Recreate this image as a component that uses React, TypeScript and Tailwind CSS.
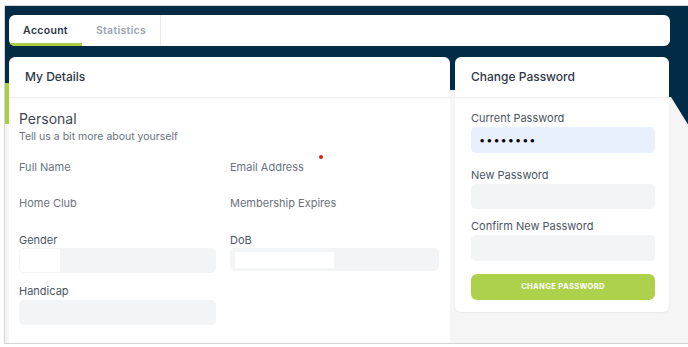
import React from "react";

const head = "font-['Inter','Noto_Sans',sans-serif]";

const Label = ({ children, dark = false }: { children: React.ReactNode; dark?: boolean }) => (
  <div className={`text-[11px] leading-[14px] ${dark ? "text-[#4b5563]" : "text-[#6b7280]"}`}>{children}</div>
);

const Field = ({ label, gap = "gap-[2px]", children }: { label: string; gap?: string; children?: React.ReactNode }) => (
  <div className={`flex flex-col ${gap}`}>
    <Label dark>{label}</Label>
    {children}
  </div>
);

export default function App() {
  return (
    <div className="h-[347px] w-[688px] overflow-hidden bg-white pl-[4px] pt-[5px] font-['Inter','Liberation_Sans',sans-serif]">
      <div className="relative h-[339px] overflow-hidden border-l border-t border-b border-[#d4d4d4] bg-[#f5f5f5]">
        {/* backdrop */}
        <svg className="absolute left-0 top-0" width="684" height="140" viewBox="0 0 684 140">
          <polygon points="0,40 10,40 10,118 0,118" fill="#a9cf45" />
          <polygon points="0,0 684,0 684,120 666,91 448,84 0,77" fill="#022b45" />
        </svg>

        <div className="relative flex flex-col gap-[11px] pl-[4px] pr-[18px] pt-[9px]">
          {/* tabs */}
          <div className={`flex h-[31px] overflow-hidden rounded-[6px] bg-white ${head}`}>
            <div className="flex w-[73px] items-center justify-center border-b-[3px] border-[#a9cf45] pt-[3px] text-[10.5px] font-semibold tracking-[0.3px] text-[#2d3748]">
              Account
            </div>
            <div className="flex w-[79px] items-center justify-center border-r border-[#ececec] text-[10.5px] font-semibold tracking-[0.3px] text-[#9ca3af]">
              Statistics
            </div>
          </div>

          <div className="flex items-start gap-[5px]">
            {/* My details */}
            <div className="h-[300px] w-[441px] rounded-t-[6px] bg-white">
              <div className={`flex h-[41px] items-center border-b border-[#eeeeee] pl-[16px] text-[12px] font-medium text-[#2d3748] ${head}`}>
                My Details
              </div>
              <div className="px-[10px] pt-[12px]">
                <div className="text-[14px] leading-[17px] text-[#3f4652]">Personal</div>
                <div className="mt-[3px] text-[10.5px] leading-[13px] text-[#6b7280]">Tell us a bit more about yourself</div>

                <div className="mt-[17px] grid grid-cols-[197px_209px] gap-x-[14px]">
                  <Label>Full Name</Label>
                  <div className="relative">
                    <Label>Email Address</Label>
                    <span className="absolute left-[89px] top-[-5px] h-[4px] w-[4px] rounded-full bg-[#e01b1b]" />
                  </div>
                </div>

                <div className="mt-[22px] grid grid-cols-[197px_209px] gap-x-[14px]">
                  <Label>Home Club</Label>
                  <Label>Membership Expires</Label>
                </div>

                <div className="mt-[23px] grid grid-cols-[197px_209px] gap-x-[14px]">
                  <Field label="Gender" gap="gap-[1px]">
                    <div className="flex h-[25px] items-stretch rounded-[5px] bg-[#f3f4f6] py-[1px] pl-[1px]">
                      <div className="w-[40px] rounded-l-[4px] bg-white" />
                    </div>
                  </Field>
                  <Field label="DoB" gap="gap-[1px]">
                    <div className="flex h-[23px] items-center rounded-[5px] bg-[#f3f4f6] pl-[5px]">
                      <div className="h-[16px] w-[99px] bg-white" />
                    </div>
                  </Field>
                </div>

                <div className="mt-[11px] w-[197px]">
                  <Field label="Handicap">
                    <div className="h-[25px] rounded-[5px] bg-[#f3f4f6]" />
                  </Field>
                </div>
              </div>
            </div>

            {/* Change password */}
            <div className="w-[214px] rounded-[6px] bg-white pb-[12px] shadow-[0_1px_2px_rgba(0,0,0,0.06)]">
              <div className={`flex h-[41px] items-center border-b border-[#eeeeee] pl-[16px] text-[12px] font-medium text-[#2d3748] ${head}`}>
                Change Password
              </div>
              <div className="flex flex-col pl-[16px] pr-[14px] pt-[13px]">
                <Field label="Current Password">
                  <div className="flex h-[26px] items-center rounded-[5px] bg-[#e8f0fe] pl-[8px] text-[11px] tracking-[1px] text-black">
                    ••••••••
                  </div>
                </Field>
                <div className="mt-[15px]">
                  <Field label="New Password">
                    <div className="h-[25px] rounded-[5px] bg-[#f3f4f6]" />
                  </Field>
                </div>
                <div className="mt-[10px]">
                  <Field label="Confirm New Password">
                    <div className="h-[26px] rounded-[5px] bg-[#f3f4f6]" />
                  </Field>
                </div>
                <button className={`mt-[13px] h-[26px] rounded-[6px] bg-[#aed14b] text-[7.5px] font-bold tracking-[0.4px] text-white ${head}`}>
                  CHANGE PASSWORD
                </button>
              </div>
            </div>
          </div>
        </div>
      </div>
    </div>
  );
}
